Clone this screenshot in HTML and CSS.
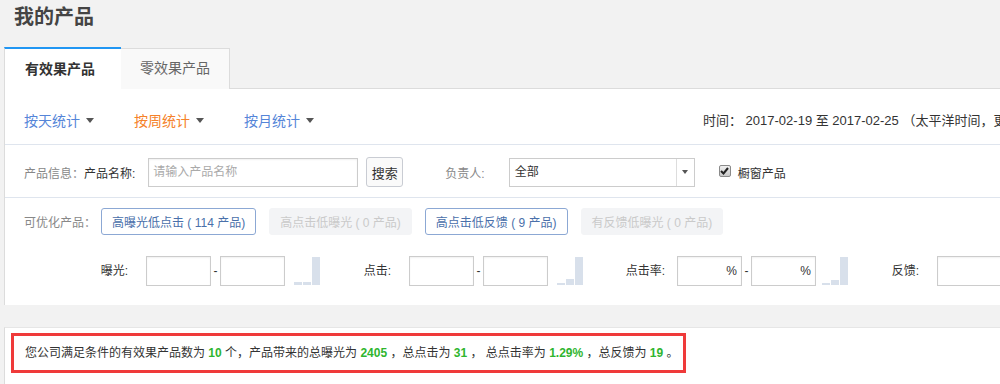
FILE: index.html
```html
<!DOCTYPE html>
<html lang="zh-CN">
<head>
    <meta charset="UTF-8">
    <meta name="viewport" content="width=device-width, initial-scale=1.0">
    <title>我的产品</title>
    <link rel="stylesheet" href="styles.css">
</head>
<body>
<div class="page">
    <h1>我的产品</h1>

    <div class="tabs">
        <div class="tab active">有效果产品</div>
        <div class="tab">零效果产品</div>
    </div>

    <div class="panel">
        <div class="row row-stats">
            <div class="stat-links">
                <span class="stat-link">按天统计<i class="caret"></i></span>
                <span class="stat-link current">按周统计<i class="caret"></i></span>
                <span class="stat-link">按月统计<i class="caret"></i></span>
            </div>
            <div class="time">时间： 2017-02-19 至 2017-02-25 （太平洋时间，更新</div>
        </div>

        <div class="row row-search">
            <span class="muted">产品信息：</span><span>产品名称:</span>
            <input type="text" class="text-input name-input" placeholder="请输入产品名称">
            <button class="btn-search">搜索</button>
            <span class="muted owner-label">负责人:</span>
            <div class="select">
                <span class="select-value">全部</span>
                <span class="select-arrow"><i class="caret small"></i></span>
            </div>
            <span class="checkbox">
                <svg width="9" height="8" viewBox="0 0 9 8"><path d="M1 4 L3.5 6.5 L8 1" fill="none" stroke="#222" stroke-width="2"/></svg>
            </span>
            <span class="check-label">橱窗产品</span>
        </div>

        <div class="row row-quick">
            <span class="muted">可优化产品：</span>
            <button class="quick">高曝光低点击 ( 114 产品)</button>
            <button class="quick disabled">高点击低曝光 ( 0 产品)</button>
            <button class="quick">高点击低反馈 ( 9 产品)</button>
            <button class="quick disabled">有反馈低曝光 ( 0 产品)</button>
        </div>

        <div class="row row-range">
            <div class="range">
                <span class="range-label">曝光:</span>
                <input type="text" class="text-input small-input">
                <span class="dash">-</span>
                <input type="text" class="text-input small-input">
                <span class="bars"><i style="height:3px"></i><i style="height:3px"></i><i style="height:28px"></i></span>
            </div>
            <div class="range">
                <span class="range-label">点击:</span>
                <input type="text" class="text-input small-input">
                <span class="dash">-</span>
                <input type="text" class="text-input small-input">
                <span class="bars"><i style="height:2px"></i><i style="height:6px"></i><i style="height:28px"></i></span>
            </div>
            <div class="range range-rate">
                <span class="range-label">点击率:</span>
                <span class="pct-input"><input type="text" class="text-input small-input"><em>%</em></span>
                <span class="dash">-</span>
                <span class="pct-input"><input type="text" class="text-input small-input"><em>%</em></span>
                <span class="bars"><i style="height:2px"></i><i style="height:5px"></i><i style="height:28px"></i></span>
            </div>
            <div class="range">
                <span class="range-label">反馈:</span>
                <input type="text" class="text-input small-input wide-input">
            </div>
        </div>
    </div>

    <div class="panel summary-panel">
        <div class="summary">
            您公司满足条件的有效果产品数为 <b>10</b> 个，产品带来的总曝光为 <b>2405</b> ，总点击为 <b>31</b> ， 总点击率为 <b>1.29%</b> ，总反馈为 <b>19</b> 。
        </div>
    </div>
</div>
</body>
</html>
```

FILE: styles.css
```css
body {
    margin: 0;
    background-color: #f2f2f2;
    color: #333;
    font-family: "Liberation Sans", "Noto Sans CJK SC", sans-serif;
    font-size: 12px;
    overflow: hidden;
}

.page {
    width: 1300px;
    padding-left: 4px;
}

h1 {
    margin: 0 0 16px;
    padding: 3px 10px 0;
    font-size: 20px;
    line-height: 28px;
    color: #444;
}

.tabs {
    display: flex;
    height: 41px;
    border-bottom: 1px solid #dcdcdc;
}

.tab {
    box-sizing: border-box;
    height: 41px;
    padding: 0 19px;
    margin-top: 1px;
    line-height: 38px;
    font-size: 14px;
    color: #666;
    background-color: #f9f9f9;
    border: 1px solid #dcdcdc;
    border-bottom: none;
    border-left: none;
}

.tab.active {
    width: 117px;
    height: 42px;
    margin-top: 0;
    padding: 0 20px;
    line-height: 40px;
    font-weight: bold;
    color: #333;
    background-color: #fff;
    border: none;
    border-top: 2px solid #2196f3;
    border-left: 1px solid #dcdcdc;
}

.panel {
    background-color: #fff;
    border-left: 1px solid #dcdcdc;
    padding-bottom: 19px;
}

.row {
    display: flex;
    align-items: center;
    padding-left: 19px;
}

.row-stats {
    padding-top: 22px;
    padding-bottom: 13px;
    border-bottom: 1px solid #dfe5ee;
    line-height: 20px;
}

.stat-links {
    width: 679px;
    display: flex;
    font-size: 14px;
}

.stat-link {
    color: #5585d8;
    margin-right: 40px;
}

.stat-link.current {
    color: #f5822a;
}

.caret {
    display: inline-block;
    width: 0;
    height: 0;
    margin-left: 6px;
    vertical-align: 3px;
    border-left: 4px solid transparent;
    border-right: 4px solid transparent;
    border-top: 5px solid #555;
}

.caret.small {
    margin: 0;
    border-left-width: 3px;
    border-right-width: 3px;
    border-top-width: 4px;
}

.time {
    font-size: 13px;
    white-space: nowrap;
}

.row-search {
    padding-top: 12px;
    padding-bottom: 10px;
    border-bottom: 1px solid #dfe5ee;
}

.muted {
    color: #888;
}

.text-input {
    box-sizing: border-box;
    height: 30px;
    border: 1px solid #ccc;
    box-shadow: inset 0 1px 2px rgba(0, 0, 0, 0.06);
    padding: 0 4px;
    font: 12px "Liberation Sans", "Noto Sans CJK SC", sans-serif;
    color: #333;
    outline: none;
}

.text-input::placeholder {
    color: #aaa;
}

.name-input {
    width: 210px;
    height: 29px;
    margin-left: 13px;
}

.btn-search {
    box-sizing: border-box;
    width: 37px;
    height: 30px;
    margin-left: 8px;
    padding: 0;
    font: 13px "Liberation Sans", "Noto Sans CJK SC", sans-serif;
    color: #333;
    background-color: #fafafa;
    border: 1px solid #c9ccd3;
    border-radius: 3px;
}

.owner-label {
    margin-left: 42px;
}

.select {
    box-sizing: border-box;
    display: flex;
    width: 186px;
    height: 29px;
    margin-left: 24px;
    border: 1px solid #ccc;
}

.select-value {
    flex: 1;
    padding-left: 5px;
    line-height: 27px;
}

.select-arrow {
    width: 17px;
    border-left: 1px solid #ddd;
    display: flex;
    align-items: center;
    justify-content: center;
}

.checkbox {
    box-sizing: border-box;
    width: 12px;
    height: 12px;
    margin-left: 24px;
    margin-top: -2px;
    border: 1px solid #8a8a8a;
    border-radius: 2px;
    background: linear-gradient(#f0f0f0, #c8c8c8);
    display: flex;
    align-items: center;
    justify-content: center;
}

.check-label {
    margin-left: 7px;
    color: #333;
}

.row-quick {
    padding-top: 10px;
}

.quick {
    box-sizing: border-box;
    height: 27px;
    margin-left: 13px;
    padding: 0 10px;
    font: 12px "Liberation Sans", "Noto Sans CJK SC", sans-serif;
    color: #4a70aa;
    background-color: #fff;
    border: 1px solid #8ca8d4;
    border-radius: 3px;
}

.row-quick .muted + .quick {
    margin-left: 5px;
}

.quick.disabled {
    color: #cacaca;
    background-color: #f3f4f6;
    border-color: #f3f4f6;
}

.row-range {
    padding-top: 21px;
    padding-left: 50px;
}

.range {
    display: flex;
    align-items: flex-end;
    height: 30px;
}

.range-label {
    width: 71px;
    margin-right: 18px;
    line-height: 30px;
    text-align: right;
}

.range:first-child .range-label {
    width: 73px;
}

.range-rate .range-label {
    width: 82px;
    margin-right: 12px;
}

.range-rate .bars {
    margin-left: 6px;
}

.small-input {
    width: 65px;
}

.wide-input {
    width: 90px;
}

.dash {
    width: 9px;
    line-height: 30px;
    text-align: center;
}

.pct-input {
    position: relative;
    display: flex;
}

.pct-input em {
    position: absolute;
    right: 5px;
    top: 0;
    line-height: 30px;
    font-style: normal;
}

.bars {
    display: flex;
    align-items: flex-end;
    gap: 1px;
    margin-left: 9px;
    height: 28px;
    padding-bottom: 1px;
}

.bars i {
    display: block;
    width: 8px;
    background-color: #d8e0eb;
}

.summary-panel {
    margin-top: 22px;
    height: 60px;
    padding: 5px 0 0 6px;
    border-top: 1px solid #e6e6e6;
}

.summary {
    display: inline-block;
    padding: 8px 4px 8px 11px;
    line-height: 18px;
    border: 3px solid #ef3a3a;
    color: #333;
}

.summary b {
    color: #2fb52f;
}
```
